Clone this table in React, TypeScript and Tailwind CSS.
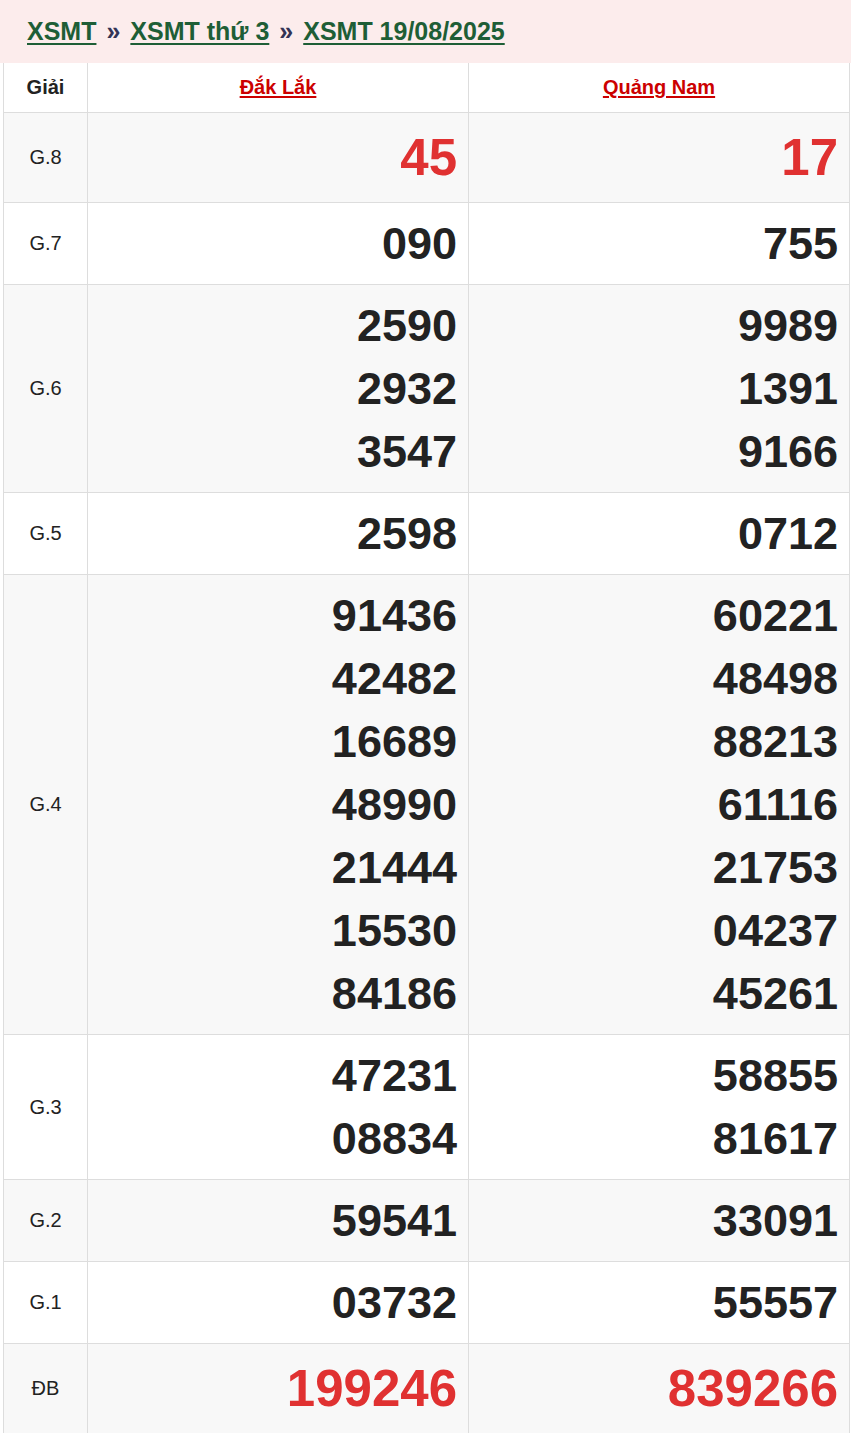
import React from "react";

interface Row {
  label: string;
  a: string[];
  b: string[];
  big?: boolean;
}

const rows: Row[] = [
  { label: "G.8", a: ["45"], b: ["17"], big: true },
  { label: "G.7", a: ["090"], b: ["755"] },
  { label: "G.6", a: ["2590", "2932", "3547"], b: ["9989", "1391", "9166"] },
  { label: "G.5", a: ["2598"], b: ["0712"] },
  {
    label: "G.4",
    a: ["91436", "42482", "16689", "48990", "21444", "15530", "84186"],
    b: ["60221", "48498", "88213", "61116", "21753", "04237", "45261"],
  },
  { label: "G.3", a: ["47231", "08834"], b: ["58855", "81617"] },
  { label: "G.2", a: ["59541"], b: ["33091"] },
  { label: "G.1", a: ["03732"], b: ["55557"] },
  { label: "ĐB", a: ["199246"], b: ["839266"], big: true },
];

function Nums({ list, big }: { list: string[]; big?: boolean }) {
  return (
    <td className="border border-[#dddddd] pr-[11px] py-[9px] text-right align-middle">
      {list.map((n, i) => (
        <div
          key={i}
          className={
            big
              ? "text-[51px] leading-[71px] font-bold text-[#e03131]"
              : "text-[45px] leading-[63px] font-bold text-[#222222]"
          }
        >
          {n}
        </div>
      ))}
    </td>
  );
}

export default function App() {
  return (
    <div className="w-[853px] bg-white" style={{ fontFamily: '"Liberation Sans", Arial, sans-serif' }}>
      <div className="h-[63px] w-[851px] bg-[#fcecec] pl-[27px] flex items-center text-[25px] font-bold text-[#1e5e36]">
        <a className="underline underline-offset-[3px]">XSMT</a>
        <span className="mx-[10px] text-[#333355]">»</span>
        <a className="underline underline-offset-[3px]">XSMT thứ 3</a>
        <span className="mx-[10px] text-[#333355]">»</span>
        <a className="underline underline-offset-[3px]">XSMT 19/08/2025</a>
      </div>
      <div className="pl-[3px]">
        <table className="table-fixed border-collapse w-[847px]">
          <colgroup>
            <col className="w-[84px]" />
            <col className="w-[381px]" />
            <col className="w-[381px]" />
          </colgroup>
          <thead>
            <tr className="h-[49px] bg-white">
              <th className="border border-[#dddddd] border-t-0 text-[20px] font-bold text-[#222222]">Giải</th>
              <th className="border border-[#dddddd] border-t-0 text-[20px] font-bold text-[#cc0000]">
                <a className="underline underline-offset-2">Đắk Lắk</a>
              </th>
              <th className="border border-[#dddddd] border-t-0 text-[20px] font-bold text-[#cc0000]">
                <a className="underline underline-offset-2">Quảng Nam</a>
              </th>
            </tr>
          </thead>
          <tbody>
            {rows.map((r, i) => (
              <tr key={r.label} className={i % 2 === 0 ? "bg-[#f8f8f8]" : "bg-white"}>
                <td className="border border-[#dddddd] text-center align-middle text-[20px] text-[#222222]">
                  {r.label}
                </td>
                <Nums list={r.a} big={r.big} />
                <Nums list={r.b} big={r.big} />
              </tr>
            ))}
          </tbody>
        </table>
      </div>
    </div>
  );
}
